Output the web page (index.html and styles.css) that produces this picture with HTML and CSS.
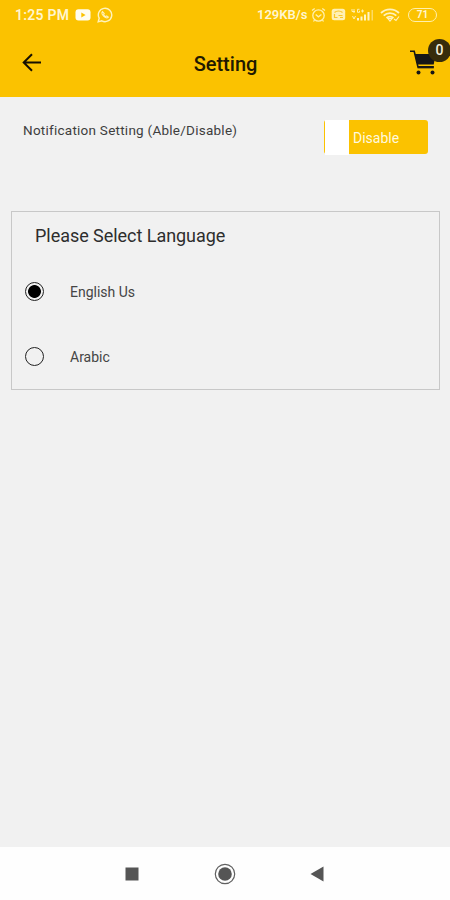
FILE: index.html
```html
<!DOCTYPE html>
<html lang="en">
<head>
<meta charset="utf-8">
<title>Setting</title>
<link rel="stylesheet" href="styles.css">
</head>
<body>
<div class="screen">
  <div class="status">
    <span class="time">1:25 PM</span>
    <svg class="youtube" width="16" height="12" viewBox="0 0 16 12"><rect x=".5" y=".3" width="15" height="11.2" rx="3" fill="#fffdf0"/><path d="M6.3 3.4v5l4.3-2.5z" fill="#fbc200"/></svg>
    <svg class="whatsapp" width="16" height="16" viewBox="0 0 16 16" fill="none" stroke="#fff3bd"><path d="M1.2 14.8l1-3.6A6.7 6.7 0 1 1 4.8 13.8z" stroke-width="1.4"/><path d="M5.4 4.6c-1.3 1.5 0 3.6 1.7 5 1.7 1.400 3.200 1.700 4.200.5l-1.600-1.200-1 .7c-1-.5-1.700-1.300-2.100-2.200l.6-.8z" stroke-width="1.100"/></svg>
    <span class="speed">129KB/s</span>
    <svg class="alarm" width="15" height="16" viewBox="0 0 15 16" fill="none" stroke="#fff0ae" stroke-width="1.3"><circle cx="7.500" cy="8.500" r="5.700"/><path d="M1 3.500l2.700-2M14 3.500l-2.700-2M4.700 7.500l2.700 2.300 3-2.300M3.500 13l-1 1.500M11.500 13l1 1.500"/></svg>
    <svg class="volte" width="15" height="13" viewBox="0 0 15 13"><rect x=".7" y=".7" width="13.500" height="11.600" rx="2.500" fill="#fff1b5"/><path d="M3.500 4.500c2-2 6-2 8 0M3.500 6v3.500h3M7.500 7.500h4M9 9.500h3" fill="none" stroke="#f9c72a" stroke-width="1.200"/></svg>
    <svg class="signal" width="24" height="14" viewBox="0 0 24 14"><path d="M2 1v2.500h3M4 1v4M9.500 1.300h-2v3h2v-1.500M11 3h3M12.500 1.500v3" fill="none" stroke="#fff0ae"/><path d="M2.500 8l1.500 3 1.500-3" fill="none" stroke="#fff0ae"/><path d="M7 10h2v2.500H7zM10.500 8.500h2v4h-2zM14 6.500h2v6h-2zM17.500 4h2v8.500h-2z" fill="#fff4c5"/><path d="M21.500 2h1.500v10.500h-1.500z" fill="#fddb65"/></svg>
    <svg class="wifi" width="20" height="14" viewBox="0 0 20 14" fill="none" stroke="#fff2bc" stroke-width="1.900"><path d="M1 5c5-4.800 13-4.800 18 0M3.700 7.600c3.500-3.300 9-3.300 12.600 0M6.500 10c2-1.800 5-1.800 7 0"/><path d="M8 10.500h4l-2 2.500zM14 11l2 1.500 3-4" stroke-width="1.200"/></svg>
    <span class="battery">71</span>
  </div>
  <header class="bar">
    <svg class="back" width="20" height="19" viewBox="0 0 20 19" fill="none" stroke="#171000" stroke-width="2"><path d="M19 9.500H2M10 1.200L1.700 9.500l8.300 8.300"/></svg>
    <h1>Setting</h1>
    <div class="cart">
      <svg width="28" height="27" viewBox="0 0 28 27"><path d="M0 2.200h4.200l3.700 15.600h16" fill="none" stroke="#171717" stroke-width="1.600"/><path d="M4.600 5h21.100l-2 10.500H7.300z" fill="#171717"/><path d="M7.500 18.700h16.300" stroke="#171717" stroke-width="1.300"/><circle cx="8.500" cy="23.500" r="2" fill="#171717"/><circle cx="22.500" cy="23.500" r="2" fill="#171717"/></svg>
      <span class="badge">0</span>
    </div>
  </header>
  <main>
    <div class="notification">
      <span class="label">Notification Setting (Able/Disable)</span>
      <button class="toggle"><span class="thumb"></span><span class="state">Disable</span></button>
    </div>
    <section class="languages">
      <h2>Please Select Language</h2>
      <div class="option"><span class="radio selected"></span><span class="english">English Us</span></div>
      <div class="option"><span class="radio"></span><span class="arabic">Arabic</span></div>
    </section>
  </main>
  <nav>
    <svg width="14" height="14" viewBox="0 0 14 14"><rect x=".5" y=".5" width="13" height="13" fill="#555"/></svg>
    <svg width="22" height="22" viewBox="0 0 22 22"><circle cx="11" cy="11" r="9.700" fill="none" stroke="#606060" stroke-width="1.200"/><circle cx="11" cy="11" r="6.800" fill="#555"/></svg>
    <svg width="14" height="16" viewBox="0 0 14 16"><path d="M13.500.500v15L.5 8z" fill="#555"/></svg>
  </nav>
</div>
</body>
</html>
```
FILE: styles.css
```css
* { box-sizing: border-box; }
body { margin: 0; font-family: Roboto, sans-serif; }
h1, h2 { margin: 0; }
svg { display: block; flex: none; }
span { white-space: nowrap; }
.screen { width: 450px; height: 900px; display: flex; flex-direction: column; background: #f1f1f1; overflow: hidden; }
.status { height: 30px; flex: none; display: flex; align-items: center; padding: 0 13px 1px 15px; background: #fbc200; color: #fff6cf; }
.time { width: 60px; font-size: 14px; font-weight: 600; letter-spacing: .25px; }
.whatsapp { margin-left: 6px; }
.speed { width: 52px; margin-left: 144px; font-size: 13px; font-weight: 600; }
.alarm { margin-left: 2px; }
.volte { margin-left: 5px; }
.signal { margin-left: 4px; }
.wifi { margin-left: 6px; }
.battery { width: 29px; height: 14px; margin-left: auto; border: 1.5px solid #fff0ae; border-radius: 7px; font-size: 10px; font-weight: 700; line-height: 12px; text-align: center; }
.bar { height: 67px; flex: none; display: grid; grid-template-columns: 100px 1fr 100px; align-items: center; background: #fbc200; }
.back { margin-left: 22px; margin-bottom: 2px; }
h1 { padding-left: 1px; text-align: center; font-size: 20px; font-weight: 500; line-height: 24px; color: #211900; }
.cart { position: relative; width: 40px; height: 27px; margin-left: 60px; margin-bottom: 2px; }
.badge { position: absolute; top: -10px; left: 18px; width: 23px; height: 23px; border-radius: 50%; background: #372d0b; color: #f5f0dd; font-size: 14px; font-weight: 500; line-height: 22px; text-align: center; }
main { flex: 1; padding: 23px 10px 0 11px; }
.notification { height: 91px; display: flex; align-items: flex-start; justify-content: space-between; padding-left: 12px; }
.label { font-size: 13.500px; line-height: 20px; color: #3e3e3e; letter-spacing: .25px; }
.toggle { width: 104px; height: 34px; display: flex; align-items: center; margin-right: 12px; padding: 0 0 0 1px; border: 0; border-radius: 3px; background: #fbc200; font-family: inherit; color: #fff9df; font-size: 14px; }
.thumb { width: 24px; height: 35px; background: #fff; }
.state { margin-left: 4px; padding-top: 1px; }
.languages { height: 179px; border: 1px solid #c8c8c8; padding: 12px 12px 0 13px; }
h2 { margin-left: 10px; font-size: 18px; font-weight: 400; line-height: 24px; letter-spacing: -.04px; color: #2d2d2d; }
.option { display: flex; align-items: center; height: 20px; margin-top: 33px; font-size: 14px; color: #454545; }
.option + .option { margin-top: 45px; }
.radio { width: 19px; height: 19px; flex: none; margin-right: 26px; border: 1.500px solid #222; border-radius: 50%; }
.selected { background: radial-gradient(circle, #000 0 6px, transparent 6.800px); }
.english, .arabic { padding-top: 2px; }
nav { height: 53px; flex: none; display: flex; align-items: center; justify-content: space-between; padding: 0 126px 0 125px; background: #fefefe; }
```
